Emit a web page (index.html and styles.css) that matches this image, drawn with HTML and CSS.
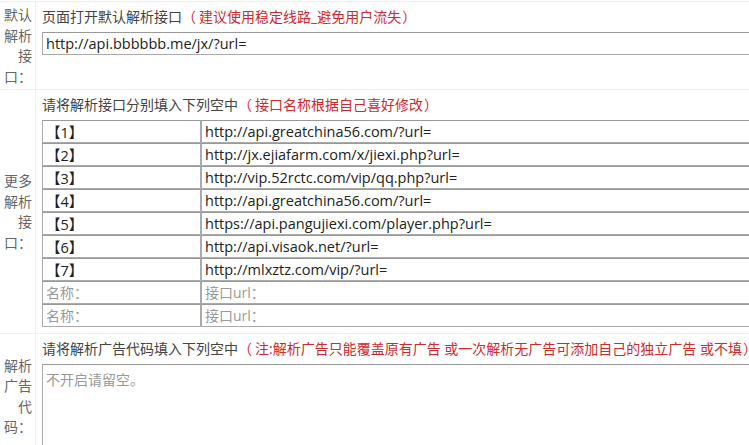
FILE: index.html
```html
<!DOCTYPE html>
<html lang="zh-CN">
<head>
<meta charset="utf-8">
<title>解析接口设置</title>
<link rel="stylesheet" href="styles.css">
</head>
<body>
<table class="form">
  <tr class="row row-default">
    <td class="label">默认解析接口：</td>
    <td class="field">
      <div class="hint">页面打开默认解析接口<span class="warn"><span class="open">（</span>建议使用稳定线路_避免用户流失<span class="close">）</span></span></div>
      <input class="text wide" type="text" value="http://api.bbbbbb.me/jx/?url=">
    </td>
  </tr>
  <tr class="row row-more">
    <td class="label">更多解析接口：</td>
    <td class="field">
      <div class="hint">请将解析接口分别填入下列空中<span class="warn"><span class="open">（</span>接口名称根据自己喜好修改<span class="close">）</span></span></div>
      <div class="pairs">
        <div class="pair"><input class="text name" value="【1】"><input class="text url" value="http://api.greatchina56.com/?url="></div>
        <div class="pair"><input class="text name" value="【2】"><input class="text url" value="http://jx.ejiafarm.com/x/jiexi.php?url="></div>
        <div class="pair"><input class="text name" value="【3】"><input class="text url" value="http://vip.52rctc.com/vip/qq.php?url="></div>
        <div class="pair"><input class="text name" value="【4】"><input class="text url" value="http://api.greatchina56.com/?url="></div>
        <div class="pair"><input class="text name" value="【5】"><input class="text url" value="https://api.pangujiexi.com/player.php?url="></div>
        <div class="pair"><input class="text name" value="【6】"><input class="text url" value="http://api.visaok.net/?url="></div>
        <div class="pair"><input class="text name" value="【7】"><input class="text url" value="http://mlxztz.com/vip/?url="></div>
        <div class="pair"><input class="text name" placeholder="名称："><input class="text url" placeholder="接口url："></div>
        <div class="pair"><input class="text name" placeholder="名称："><input class="text url" placeholder="接口url："></div>
      </div>
    </td>
  </tr>
  <tr class="row row-ad">
    <td class="label">解析广告代码：</td>
    <td class="field">
      <div class="hint">请将解析广告代码填入下列空中<span class="warn"><span class="open">（</span>注:解析广告只能覆盖原有广告 或一次解析无广告可添加自己的独立广告 或不填<span class="close">）</span></span></div>
      <textarea class="code" placeholder="不开启请留空。"></textarea>
    </td>
  </tr>
</table>
</body>
</html>
```

FILE: styles.css
```css
html, body {
  margin: 0;
  padding: 0;
  background: #fff;
  overflow: hidden;
}
body {
  padding-top: 1px;
  font-family: "Open Sans", "Noto Sans CJK SC", sans-serif;
  font-size: 14px;
  color: #444;
}
.form {
  border-collapse: collapse;
  width: 820px;
}
.row td {
  border-top: 1px solid #f0f0f0;
  border-bottom: 1px solid #f0f0f0;
}
.label {
  width: 28px;
  padding: 3px 3px 2px 4px;
  border-right: 1px solid #f0f0f0;
  text-align: right;
  vertical-align: middle;
  line-height: 20.5px;
  color: #666;
  word-break: break-all;
}
.field {
  vertical-align: top;
  padding: 5px 0 6px 6px;
}
.hint {
  height: 20px;
  line-height: 20px;
  margin-bottom: 5px;
  color: #444;
  white-space: nowrap;
}
.warn {
  color: #cc2b2b;
}
.open {
  margin-right: 3px;
}
.close {
  margin-left: 1px;
}
.text {
  box-sizing: border-box;
  height: 23px;
  margin: 0;
  padding: 0 3px;
  border: 1px solid #aaa;
  border-top-color: #999;
  font-family: "Open Sans", "Noto Sans CJK SC", sans-serif;
  font-size: 14.5px;
  color: #222;
  background: #fff;
  outline: none;
}
.text::placeholder {
  color: #999;
  font-size: 14px;
}
.wide {
  width: 760px;
  display: block;
}
.pairs {
  display: flex;
  flex-direction: column;
}
.pair {
  display: flex;
  height: 23px;
}
.name {
  width: 159px;
}
.url {
  width: 600px;
}
.code {
  display: block;
  box-sizing: border-box;
  width: 760px;
  height: 88px;
  margin: 2px 0 0;
  padding: 4px 3px;
  border: 1px solid #aaa;
  border-top-color: #999;
  font-family: "Open Sans", "Noto Sans CJK SC", sans-serif;
  font-size: 14px;
  resize: none;
  outline: none;
}
.code::placeholder {
  color: #999;
}
```
